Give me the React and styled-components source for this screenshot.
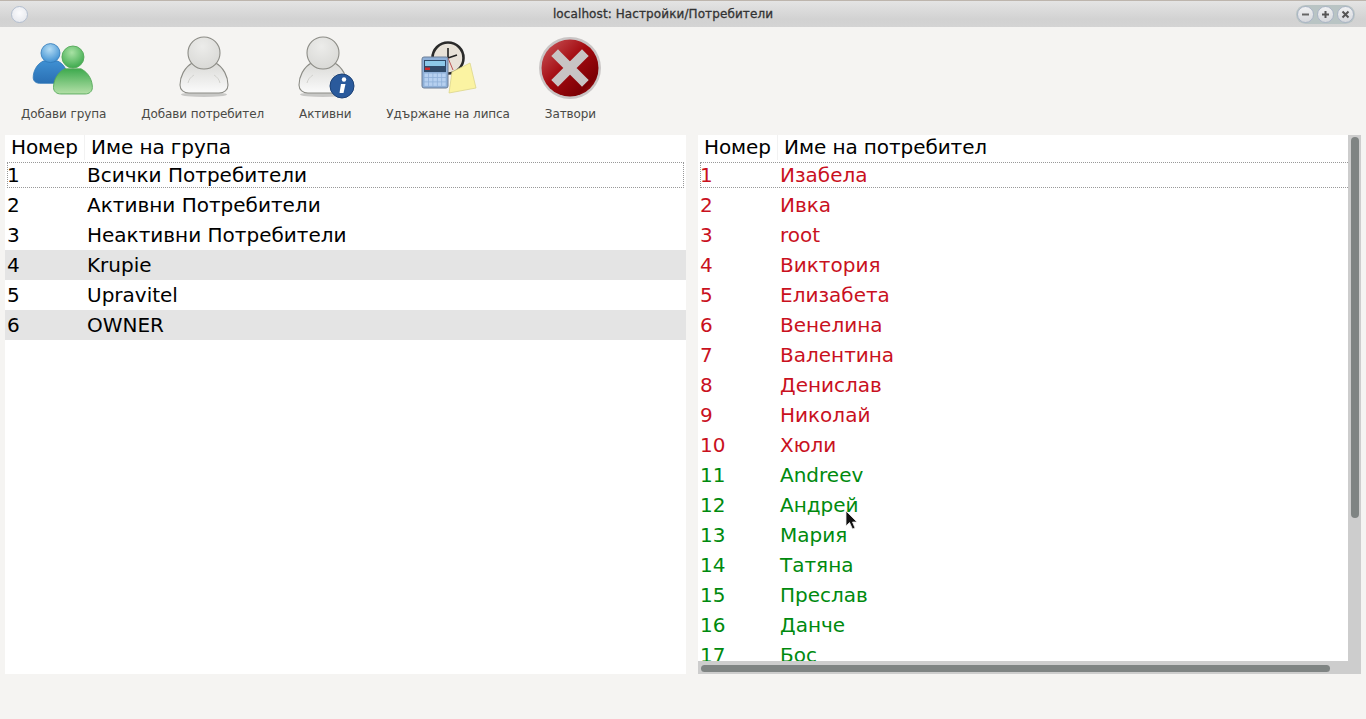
import styled, { createGlobalStyle } from "styled-components";

const groups = [
  { id: 1, name: "Всички Потребители", focus: true },
  { id: 2, name: "Активни Потребители" },
  { id: 3, name: "Неактивни Потребители" },
  { id: 4, name: "Krupie", shaded: true },
  { id: 5, name: "Upravitel" },
  { id: 6, name: "OWNER", shaded: true },
];

const users = [
  "Изабела", "Ивка", "root", "Виктория", "Елизабета", "Венелина", "Валентина", "Денислав", "Николай", "Хюли",
  "Andreev", "Андрей", "Мария", "Татяна", "Преслав", "Данче", "Бос",
];

const Global = createGlobalStyle`
  html, body { margin: 0; height: 100%; overflow: hidden; }
  body { background: #f5f4f2; font-family: "DejaVu Sans", sans-serif; }
`;

const Page = styled.div`
  position: relative;
  height: 719px;
  display: flex;
  flex-direction: column;
`;

const TitleBar = styled.div`
  height: 27px;
  box-sizing: border-box;
  border-top: 1px solid #bdb5ad;
  background: linear-gradient(#e4e4e4, #d2d2d2 70%, #d4d4d4);
  display: flex;
  align-items: center;
  justify-content: space-between;
  padding: 0 11px 0 11px;
  position: relative;
`;

const Title = styled.div`
  position: absolute;
  left: 0;
  right: 40px;
  text-align: center;
  font-size: 12px;
  letter-spacing: 0.1px;
  color: #333;
  -webkit-text-stroke: 0.3px #333;
`;

const MenuDot = styled.div`
  width: 15px;
  height: 15px;
  border-radius: 50%;
  border: 1px solid #b4bfd0;
  background: radial-gradient(circle at 50% 40%, #fbfbfd, #e2e4ea);
`;

const WinButtons = styled.div`
  display: flex;
  gap: 3px;
  padding: 1px;
  border-radius: 10px;
  background: #b9c4c4;
`;

const WinButton = styled.div`
  width: 15px;
  height: 15px;
  border-radius: 50%;
  border: 1px solid #aab4c6;
  background: linear-gradient(#f0f1f3, #d6d8dc);
  display: flex;
  align-items: center;
  justify-content: center;
`;

const Toolbar = styled.div`
  height: 108px;
  box-sizing: border-box;
  display: flex;
  gap: 35px;
  padding-left: 21px;
`;

const Tool = styled.div`
  display: flex;
  flex-direction: column;
  align-items: center;
  padding-top: 9px;
`;

const ToolIcon = styled.svg`
  width: 64px;
  height: 64px;
  margin: 0 -12px;
  display: block;
`;

const ToolLabel = styled.div`
  margin-top: 6px;
  font-size: 12px;
  line-height: 16px;
  letter-spacing: -0.1px;
  color: #4a4a46;
  white-space: nowrap;
`;

const Panels = styled.div`
  height: 539px;
  display: flex;
  gap: 12px;
  padding-left: 5px;
`;

const Panel = styled.div`
  width: ${(p) => p.$width}px;
  background: #fff;
  overflow: hidden;
`;

const ScrollFrame = styled.div`
  width: 663px;
  display: grid;
  grid-template-columns: 650px 13px;
  grid-template-rows: 526px 13px;
  background: #cdcdcd;
`;

const ViewPort = styled.div`
  background: #fff;
  overflow: hidden;
`;

const HeaderRow = styled.div`
  height: 25px;
  display: flex;
  background: #fff;
  font-size: 20px;
  line-height: 24px;
  letter-spacing: -0.08px;
  color: #000;
`;

const HeaderCell = styled.div`
  box-sizing: border-box;
  width: ${(p) => p.$width || 80}px;
  flex: ${(p) => (p.$width ? "none" : 1)};
  padding-left: 6px;
  border-right: ${(p) => (p.$width ? "1px solid #f2f2f2" : "none")};
  white-space: nowrap;
`;

const Row = styled.div`
  position: relative;
  height: 30px;
  display: flex;
  align-items: center;
  font-size: 20px;
  white-space: nowrap;
  color: ${(p) => p.$color || "#000"};
  background: ${(p) => (p.$shaded ? "#e4e4e4" : "#fff")};
`;

const NumCell = styled.div`
  width: 79px;
  flex: none;
  padding-left: 2px;
  box-sizing: border-box;
`;

const NameCell = styled.div`
  padding-left: 3px;
`;

const FocusRing = styled.div`
  position: absolute;
  top: 2px;
  bottom: 2px;
  left: 2px;
  right: ${(p) => (p.$open ? "0" : "2px")};
  border: 1px dotted #999;
  border-right-style: ${(p) => (p.$open ? "none" : "dotted")};
`;

const VTrack = styled.div`
  padding: 2px 2px 0 3px;
`;

const VThumb = styled.div`
  height: 381px;
  border-radius: 4px;
  background: #7f8483;
`;

const HTrack = styled.div`
  padding: 4px 0 0 3px;
`;

const HThumb = styled.div`
  width: 629px;
  height: 7px;
  border-radius: 4px;
  background: #7f8483;
`;

const Corner = styled.div`
  background: #cdcdcd;
`;

const Cursor = styled.svg`
  position: absolute;
  left: 845px;
  top: 510px;
  width: 14px;
  height: 20px;
`;

function PersonShape({ id, c1, c2, c3, stroke, headY = 16, headR = 16 }) {
  return (
    <>
      <defs>
        <radialGradient id={`${id}h`} cx="45%" cy="30%" r="70%">
          <stop offset="0" stopColor={c1} />
          <stop offset="1" stopColor={c2} />
        </radialGradient>
        <linearGradient id={`${id}b`} x1="0" y1="0" x2="0" y2="1">
          <stop offset="0" stopColor={c2} />
          <stop offset="1" stopColor={c3} />
        </linearGradient>
      </defs>
      <path
        d="M14 25 C4 30 0 40 0 48 C0 53 4 56 9 56 H39 C44 56 48 53 48 48 C48 40 44 30 34 25 Z"
        fill={`url(#${id}b)`}
        stroke={stroke}
        strokeWidth="1.1"
      />
      <circle cx="24" cy={headY} r={headR} fill={`url(#${id}h)`} stroke={stroke} strokeWidth="1.1" />
    </>
  );
}

function GrayUser({ id, x }) {
  return (
    <>
      <ellipse cx={x + 24} cy="58.5" rx="23" ry="2.5" fill="#000" opacity="0.18" />
      <g transform={`translate(${x} 1)`}>
        <PersonShape id={id} c1="#ececea" c2="#d9d9d6" c3="#fbfbfb" stroke="#8c8c86" />
        <path d="M8 46 C9 42 11 40 14 38 M40 46 C39 42 37 40 34 38" fill="none" stroke="#d2d2ce" strokeWidth="1" />
      </g>
    </>
  );
}

function GroupIcon() {
  return (
    <ToolIcon viewBox="0 0 64 64">
      <g transform="translate(1.2 7) scale(.72)">
        <PersonShape id="gb" c1="#b4dcf4" c2="#3f90d2" c3="#2a6fb4" stroke="#2f78b8" headY={14} headR={13.2} />
      </g>
      <g transform="translate(21.5 12.6) scale(.81)">
        <PersonShape id="gg" c1="#a8e2a4" c2="#3eaa4e" c3="#b4e0a8" stroke="#55a85a" headY={10.4} headR={13.6} />
      </g>
    </ToolIcon>
  );
}

function UserIcon() {
  return (
    <ToolIcon viewBox="0 0 64 64">
      <GrayUser id="u1" x={9} />
    </ToolIcon>
  );
}

function ActiveIcon() {
  return (
    <ToolIcon viewBox="0 0 64 64">
      <GrayUser id="u2" x={6} />
      <circle cx="49" cy="50" r="12" fill="#2a5a9c" stroke="#1d4276" strokeWidth="1" />
      <circle cx="51" cy="43.5" r="2.2" fill="#fff" />
      <path d="M48 48 H52.5 L50.5 57 H46.5 Z" fill="#fff" />
    </ToolIcon>
  );
}

function CalcIcon() {
  const keys = [];
  for (let r = 0; r < 3; r++) {
    for (let c = 0; c < 5; c++) {
      keys.push(<rect key={`${r}-${c}`} x={8.5 + c * 4.4} y={37.5 + r * 4.4} width="3.6" height="3.6" fill="#b6d0f0" />);
    }
  }
  return (
    <ToolIcon viewBox="0 0 64 64">
      <circle cx="32" cy="22" r="15.5" fill="#e8e2d8" stroke="#2a2a2a" strokeWidth="2.6" />
      <path d="M32 22 L32 12 M32 22 L41 19" stroke="#222" strokeWidth="1.6" />
      <path d="M32 22 L37 34" stroke="#b03030" strokeWidth="0.8" />
      <path d="M36 36 L54 27 L60 52 L33 57 Z" fill="#fbf3a2" stroke="#dcd68c" strokeWidth="0.8" />
      <rect x="6" y="21" width="26" height="31" rx="2" fill="#8fb0d8" stroke="#6c7f98" />
      <rect x="8" y="24" width="22" height="12" fill="#2f4a68" />
      <rect x="9" y="25" width="20" height="5" fill="#8cc8e8" />
      <rect x="9" y="31.5" width="5" height="2.5" fill="#d02828" />
      {keys}
    </ToolIcon>
  );
}

function CloseIcon() {
  return (
    <ToolIcon viewBox="0 0 64 64">
      <defs>
        <linearGradient id="cr" x1="0" y1="0" x2="1" y2="1">
          <stop offset="0" stopColor="#cc5a5e" />
          <stop offset=".45" stopColor="#a30b10" />
          <stop offset=".8" stopColor="#7c0004" />
          <stop offset="1" stopColor="#b81e22" />
        </linearGradient>
      </defs>
      <circle cx="32" cy="32" r="31" fill="#c9c5c5" />
      <circle cx="32" cy="32" r="28.5" fill="url(#cr)" />
      <path d="M20 20 L44 44 M44 20 L20 44" stroke="#c8c4c4" strokeWidth="9.5" strokeLinecap="square" />
    </ToolIcon>
  );
}

const tools = [
  { label: "Добави група", Icon: GroupIcon },
  { label: "Добави потребител", Icon: UserIcon },
  { label: "Активни", Icon: ActiveIcon },
  { label: "Удържане на липса", Icon: CalcIcon },
  { label: "Затвори", Icon: CloseIcon },
];

export default function App() {
  return (
    <Page>
      <Global />
      <TitleBar>
        <Title>localhost: Настройки/Потребители</Title>
        <MenuDot />
        <WinButtons>
          <WinButton>
            <svg width="9" height="9" viewBox="0 0 9 9"><path d="M1 4.5 H8" stroke="#666" strokeWidth="2" /></svg>
          </WinButton>
          <WinButton>
            <svg width="9" height="9" viewBox="0 0 9 9"><path d="M1 4.5 H8 M4.5 1 V8" stroke="#555" strokeWidth="2" /></svg>
          </WinButton>
          <WinButton>
            <svg width="9" height="9" viewBox="0 0 9 9"><path d="M1.5 1.5 L7.5 7.5 M7.5 1.5 L1.5 7.5" stroke="#555" strokeWidth="2" /></svg>
          </WinButton>
        </WinButtons>
      </TitleBar>

      <Toolbar>
        {tools.map(({ label, Icon }) => (
          <Tool key={label}>
            <Icon />
            <ToolLabel>{label}</ToolLabel>
          </Tool>
        ))}
      </Toolbar>

      <Panels>
        <Panel $width={681}>
          <HeaderRow>
            <HeaderCell $width={80}>Номер</HeaderCell>
            <HeaderCell>Име на група</HeaderCell>
          </HeaderRow>
          {groups.map((g) => (
            <Row key={g.id} $shaded={g.shaded}>
              {g.focus && <FocusRing />}
              <NumCell>{g.id}</NumCell>
              <NameCell>{g.name}</NameCell>
            </Row>
          ))}
        </Panel>

        <ScrollFrame>
          <ViewPort>
            <HeaderRow>
              <HeaderCell $width={80}>Номер</HeaderCell>
              <HeaderCell>Име на потребител</HeaderCell>
            </HeaderRow>
            {users.map((name, i) => (
              <Row key={name} $color={i < 10 ? "#c9111e" : "#008a0e"}>
                {i === 0 && <FocusRing $open />}
                <NumCell>{i + 1}</NumCell>
                <NameCell>{name}</NameCell>
              </Row>
            ))}
          </ViewPort>
          <VTrack>
            <VThumb />
          </VTrack>
          <HTrack>
            <HThumb />
          </HTrack>
          <Corner />
        </ScrollFrame>
      </Panels>

      <Cursor viewBox="0 0 14 20">
        <path d="M1 1 V16 L4.5 12.5 L7.5 19 L10 18 L7.5 12 H12 Z" fill="#111" stroke="#eee" strokeWidth="0.8" />
      </Cursor>
    </Page>
  );
}
